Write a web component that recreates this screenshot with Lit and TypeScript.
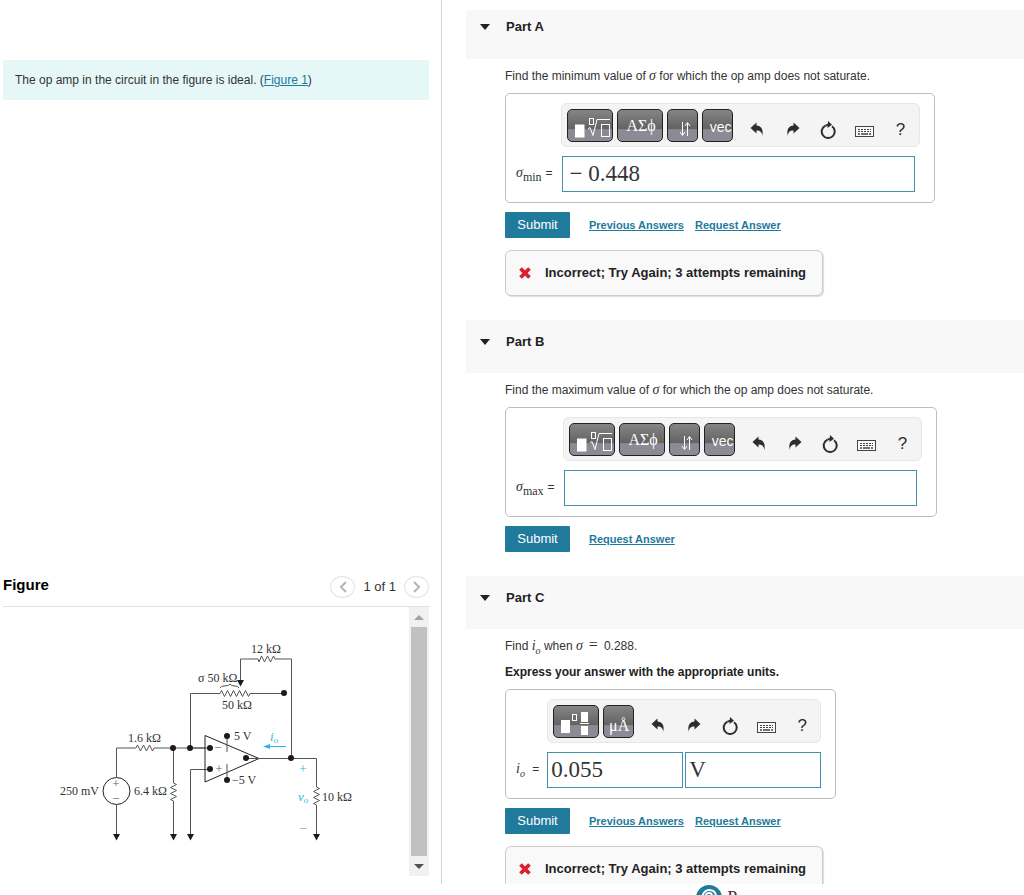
import { LitElement, html, svg, css, nothing, TemplateResult } from "lit";
import { customElement, property } from "lit/decorators.js";

const undoIcon = svg`<path d="M0.5 6 L6.5 0.5 V3.5 C11 4 13.8 7 12.2 14 C12 10.500 10.500 8.600 6.500 8.600 V11.500 Z" fill="#2d2d2d"/>`;

@customElement("math-toolbar")
export class MathToolbar extends LitElement {
  @property({ type: Boolean }) units = false;

  static styles = css`
    :host { display: block; }
    * { box-sizing: border-box; }
    .bar {
      display: flex; align-items: center; height: 44px; padding: 0 0 0 5px;
      border: 1px solid #e6e6e6; border-radius: 6px; background: #f4f4f4;
    }
    button { font: inherit; padding: 0; margin: 0; border: 0; background: none; cursor: pointer; }
    .key {
      display: flex; flex: none; justify-content: flex-end; align-items: center; overflow: hidden;
      height: 33px; margin: 0 4px 0 0; border: 1px solid #222; border-radius: 5px; color: #fff;
      background: linear-gradient(#858585 0%, #626262 62%, #8b8a95 63%, #8b8a95 100%);
    }
    .wide { width: 46px; }
    .slim { width: 31px; }
    .greek { font: 16px/20px "Liberation Serif", "DejaVu Serif", serif; justify-content: center; padding: 2px 0 0 3px; }
    .vec { font: 14px/20px "Liberation Sans", Arial, sans-serif; padding-top: 4px; }
    .micro { font: 16px/20px "Liberation Serif", serif; padding: 9px 4px 0 0; }
    .actions { display: flex; flex: 1; padding-left: 2px; padding-top: 9px; }
    .act { flex: none; width: 36px; height: 24px; display: flex; align-items: center; justify-content: center; }
    .help { font: 17px/22px "Liberation Sans", Arial, sans-serif; color: #2d2d2d; }
    svg { display: block; flex: none; }
  `;

  private mathKeys() {
    return html`
      <button class="key wide" aria-label="Templates">
        <svg width="44" height="31" fill="none" stroke="#fff">
          <rect x="7.500" y="15" width="8.500" height="12" fill="#fff" />
          <rect x="21.500" y="8.500" width="4" height="6" />
          <path d="M20 19 L22 17.500 L25 25.500 L29 9.500 H42" />
          <rect x="33.500" y="14.500" width="8" height="12" />
        </svg>
      </button>
      <button class="key wide greek">ΑΣϕ</button>
      <button class="key slim" aria-label="Arrows">
        <svg width="29" height="31" fill="none" stroke="#fff">
          <path d="M14.500 12 V25 M12 22 L14.500 25.500 L17 22 M19.500 26 V13 M17 16 L19.500 12.500 L22 16" />
        </svg>
      </button>
      <button class="key slim vec">vec</button>
    `;
  }

  private unitKeys() {
    return html`
      <button class="key wide" aria-label="Templates">
        <svg width="44" height="31" fill="none" stroke="#fff">
          <rect x="7" y="14" width="9" height="13" fill="#fff" stroke="none" />
          <rect x="18.500" y="8.500" width="4" height="6" />
          <rect x="27" y="6" width="7" height="10" fill="#fff" stroke="none" />
          <path d="M26 17.500 H35" />
          <rect x="27" y="20" width="7" height="9" fill="#fff" stroke="none" />
        </svg>
      </button>
      <button class="key slim micro">μÅ</button>
    `;
  }

  render() {
    return html`
      <div class="bar" role="toolbar">
        ${this.units ? this.unitKeys() : this.mathKeys()}
        <div class="actions">
          <button class="act" aria-label="Undo"><svg width="14" height="15">${undoIcon}</svg></button>
          <button class="act" aria-label="Redo">
            <svg width="14" height="15"><g transform="translate(14 0) scale(-1 1)">${undoIcon}</g></svg>
          </button>
          <button class="act" aria-label="Reset">
            <svg width="17" height="18" fill="none">
              <path d="M12 5.200 A6.500 6.500 0 1 1 5.500 4.600" stroke="#2d2d2d" stroke-width="2" />
              <path d="M8 0 L12 3.800 L7.500 7 Z" fill="#2d2d2d" />
              <path d="M5.500 4.600 L9 3.500" stroke="#2d2d2d" stroke-width="2" />
            </svg>
          </button>
          <button class="act" aria-label="Keyboard">
            <svg width="19" height="17" fill="none" stroke="#444">
              <rect x="0.500" y="5.500" width="18" height="10" fill="#fafafa" />
              <path d="M3 8.500 H16 M3 10.500 H16" stroke-dasharray="2 1" />
              <path d="M3 13 H5 M6 13 H13 M14 13 H16" stroke-width="1.500" />
            </svg>
          </button>
          <button class="act help" aria-label="Help">?</button>
        </div>
      </div>
    `;
  }
}

@customElement("circuit-diagram")
export class CircuitDiagram extends LitElement {
  static styles = css`
    :host { display: block; }
    svg { display: block; }
    .wire { fill: none; stroke: #555; stroke-width: 1; }
    .dot { fill: #1c1a1b; }
    .label { font: 12px "Liberation Serif", serif; fill: #333; }
    .sign { font: 13px "Liberation Serif", serif; fill: #666; text-anchor: middle; }
    .cyan { fill: #2bb5e6; }
    .var { font: italic 13px "Liberation Serif", serif; fill: #2bb5e6; }
    .sub { font-size: 9px; }
    .cyanline { stroke: #2bb5e6; fill: none; }
  `;

  render() {
    const dots = [[173, 748], [190, 748], [210, 748], [210, 769], [227, 736], [227, 780], [246, 758], [291, 758], [284, 693]];
    const grounds = [[116, 840], [173, 840], [190, 840], [316, 840], [240, 686]];
    const labels: [number, number, string][] = [
      [251, 653, "12 kΩ"], [198, 682, "σ 50 kΩ"], [222, 709, "50 kΩ"], [128, 742, "1.6 kΩ"],
      [60, 795, "250 mV"], [134, 795, "6.4 kΩ"], [234, 740, "5 V"], [232, 784, "−5 V"], [322, 801, "10 kΩ"],
    ];
    return html`
      <svg width="406" height="269" viewBox="3 607 406 269" role="img" aria-label="Op amp circuit">
        <g class="wire">
          <path d="M116.500 777 V748 H136 l1.500 -3 3 6 3 -6 3 6 3 -6 3 6 1.500 -3 H205" />
          <circle cx="116.500" cy="791" r="13.500" stroke="#222" />
          <path d="M116.500 805 V836" />
          <path d="M173.500 748 V783 l3 1.500 -6 3 6 3 -6 3 6 3 -6 3 3 1.500 V836" />
          <path d="M190.500 748 V693.500 H220 l1.500 -3 3 6 3 -6 3 6 3 -6 3 6 3 -6 3 6 3 -6 3 6 1.500 -3 H284" />
          <path d="M190.500 836 V769.500 H210" />
          <path d="M190 748 H210" />
          <path d="M205 735.500 V782 L259 758.500 Z" stroke="#222" />
          <path d="M227 736 V752 M227 780 V764" />
          <path d="M246 758.500 H316.500 V787 l3 1.500 -6 3 6 3 -6 3 6 3 -6 3 3 1.500 V836" />
          <path d="M291.500 758 V659 H275 l-1.500 -3 -3 6 -3 -6 -3 6 -3 -6 -2.500 6 -1 -3 H240.500 V682" />
          <path d="M220 688 q1 -2 4 -2 q5 0 6 -2 q1 2 5 2 q3 0 4 2" />
        </g>
        ${dots.map(([x, y]) => svg`<circle class="dot" cx=${x} cy=${y} r="3" />`)}
        ${grounds.map(([x, y]) => svg`<path class="dot" d="M${x - 3} ${y - 6} h7 l-3.500 6.500 z" />`)}
        ${labels.map(([x, y, t]) => svg`<text class="label" x=${x} y=${y}>${t}</text>`)}
        <text class="sign" x="116" y="788">+</text>
        <text class="sign" x="116" y="803">−</text>
        <text class="sign" x="218" y="752">−</text>
        <text class="sign" x="219" y="773">+</text>
        <text class="sign cyan" x="303" y="773">+</text>
        <text class="sign cyan" x="303" y="833">−</text>
        <text class="var" x="270" y="741">i<tspan class="sub" dy="2">o</tspan></text>
        <text class="var" x="298" y="801">v<tspan class="sub" dy="2">o</tspan></text>
        <path class="cyanline" d="M268 746.500 H286" />
        <path class="cyan" d="M263 746.500 L270 744 V749 Z" />
      </svg>
    `;
  }
}

@customElement("app-root")
export class AppRoot extends LitElement {
  static styles = css`
    :host {
      display: flex; flex-direction: column; height: 100vh; overflow: hidden; background: #fff;
      font: 12px/20px "Liberation Sans", Arial, sans-serif; color: #333;
    }
    * { box-sizing: border-box; }
    button { font: inherit; padding: 0; margin: 0; cursor: pointer; }
    a { color: #1c7a9c; }
    svg { display: block; }
    main { flex: 1; min-height: 0; display: grid; grid-template-columns: minmax(300px, 442px) minmax(0, 1fr); }

    .left { display: flex; flex-direction: column; min-height: 0; padding: 60px 12px 8px 3px; border-right: 1px solid #ccd3d8; }
    .intro { padding: 10px 12px; background: #e6f7f8; color: #333; }
    .figure { margin-top: auto; }
    .fighead { display: flex; align-items: center; justify-content: space-between; height: 40px; border-bottom: 1px solid #e2e2e2; }
    .fighead h2 { margin: 0; padding-bottom: 4px; font-size: 15px; line-height: 20px; color: #000; }
    .pager { display: flex; align-items: center; gap: 8px; font-size: 13px; }
    .page { display: flex; align-items: center; justify-content: center; width: 25px; height: 22px; border: 1px solid #e2e2e2; border-radius: 50%; background: #fff; }
    .figbody { display: flex; justify-content: space-between; }
    .scroll { display: flex; flex: none; flex-direction: column; width: 20px; background: #f1f1f1; }
    .step { display: flex; align-items: center; justify-content: center; height: 20px; border: 0; background: none; }
    .thumb { flex: 1; margin: 0 2px; background: #c1c1c1; }

    .right { min-height: 0; overflow: hidden; padding: 10px 0 0 24px; }
    .part { margin-bottom: 24px; }
    .parthead { display: flex; align-items: flex-start; gap: 16px; height: 53px; padding: 13px 14px 0; background: #f8f8f8; }
    .part:first-child .parthead { height: 49px; padding-top: 8px; }
    .parthead h2 { margin: 0; font-size: 13px; line-height: 18px; color: #222; }
    .toggle { display: flex; align-items: center; justify-content: center; width: 10px; height: 18px; border: 0; background: none; }
    .body { padding: 7px 14px 0 39px; }
    .body p { margin: 0; }
    .body .units { margin-top: 6px; font-weight: bold; color: #222; }
    .m { font-family: "Liberation Serif", serif; font-style: italic; font-size: 14px; line-height: 1; }
    .m sub { font-size: 10px; line-height: 0; }
    .m .up { font-style: normal; font-size: 12px; }
    .eq { margin: 0 2px; font: 16px/1 "Liberation Serif", serif; }
    .answer {
      display: grid; grid-template-columns: auto auto; width: fit-content; column-gap: 8px; row-gap: 9px;
      height: 110px; margin-top: 7px; padding: 9px 14px 10px 10px; border: 1px solid #bdbdbd; border-radius: 5px; background: #fff;
    }
    .tools { grid-column: 2; }
    .math { width: 359px; }
    .unit { width: 274px; }
    .answer label { align-self: center; padding-bottom: 2px; white-space: nowrap; }
    .answer label .m { margin-right: 4px; }
    .fields { display: flex; gap: 2px; width: 359px; padding: 0 5px 0 1px; }
    .pair { width: 274px; padding: 0; }
    .fields input {
      flex: 1; width: 0; min-width: 0; height: 36px; padding: 0 7px; border: 1px solid #4391af; border-radius: 0; outline: 0;
      font: 23px "Liberation Serif", serif; color: #333; background: #fff;
    }
    .pair input { padding: 0 3px; }
    .row { display: flex; align-items: center; margin-top: 9px; font-size: 11px; font-weight: bold; }
    .submit { width: 65px; height: 26px; margin-right: 19px; border: 0; border-radius: 1px; background: #1f7a9c; color: #fff; font-size: 13px; font-weight: normal; }
    .row a { margin-right: 11px; }
    .feedback {
      display: flex; align-items: center; width: fit-content; gap: 13px; height: 46px; margin-top: 12px; padding: 0 16px 0 12px;
      border: 1px solid #ccc; border-radius: 6px; box-shadow: 1px 1px 1px #ddd; background: #f9f9f9; font-size: 13px; font-weight: bold; color: #222;
    }
    footer { height: 11px; overflow: hidden; }
    .brand { display: flex; gap: 5px; padding-left: 68%; font: 18px/28px "Liberation Serif", serif; color: #333; }
  `;

  private part(
    letter: string, prompt: TemplateResult, label: TemplateResult, values: string[],
    options: { attempted?: boolean; units?: boolean } = {},
  ) {
    const { attempted = false, units = false } = options;
    return html`
      <section class="part">
        <div class="parthead">
          <button class="toggle" aria-label="Collapse Part ${letter}">
            <svg width="10" height="6"><path d="M0 0 H10 L5 6 Z" fill="#222" /></svg>
          </button>
          <h2>Part ${letter}</h2>
        </div>
        <div class="body">
          <p>${prompt}</p>
          ${units ? html`<p class="units">Express your answer with the appropriate units.</p>` : nothing}
          <div class="answer">
            <math-toolbar class="tools ${units ? "unit" : "math"}" ?units=${units}></math-toolbar>
            <label for="answer-${letter}">${label}</label>
            <div class="fields ${units ? "pair" : ""}">
              ${values.map((v, i) => html`
                <input id=${i ? `unit-${letter}` : `answer-${letter}`} aria-label=${i ? "Units" : "Value"} .value=${v} />`)}
            </div>
          </div>
          <div class="row">
            <button class="submit">Submit</button>
            ${attempted ? html`<a href="#previous">Previous Answers</a>` : nothing}
            <a href="#request">Request Answer</a>
          </div>
          ${attempted ? html`
            <div class="feedback" role="status">
              <svg width="14" height="14" viewBox="0 0 14 14"><path d="M2.500 2.500 L11.500 11.500 M11.500 2.500 L2.500 11.500" stroke="#d9202e" stroke-width="3.800" /></svg>
              <span>Incorrect; Try Again; 3 attempts remaining</span>
            </div>` : nothing}
        </div>
      </section>
    `;
  }

  render() {
    const sigma = html`<span class="m">σ</span>`;
    return html`
      <main>
        <div class="left">
          <div class="intro">The op amp in the circuit in the figure is ideal. (<a href="#figure">Figure 1</a>)</div>
          <section class="figure" id="figure">
            <div class="fighead">
              <h2>Figure</h2>
              <div class="pager">
                <button class="page" aria-label="Previous figure">
                  <svg width="8" height="12" fill="none" stroke="#b5b5b5" stroke-width="2"><path d="M7 1 L2 6 L7 11" /></svg>
                </button>
                <span>1 of 1</span>
                <button class="page" aria-label="Next figure">
                  <svg width="8" height="12" fill="none" stroke="#b5b5b5" stroke-width="2"><path d="M1 1 L6 6 L1 11" /></svg>
                </button>
              </div>
            </div>
            <div class="figbody">
              <circuit-diagram></circuit-diagram>
              <div class="scroll">
                <button class="step" aria-label="Scroll up"><svg width="10" height="5"><path d="M0 5 L5 0 L10 5 Z" fill="#a3a3a3" /></svg></button>
                <div class="thumb"></div>
                <button class="step" aria-label="Scroll down"><svg width="10" height="5"><path d="M0 0 H10 L5 5 Z" fill="#505050" /></svg></button>
              </div>
            </div>
          </section>
        </div>
        <div class="right">
          ${this.part("A", html`Find the minimum value of ${sigma} for which the op amp does not saturate.`,
            html`<span class="m">σ<sub class="up">min</sub></span>=`, ["− 0.448"], { attempted: true })}
          ${this.part("B", html`Find the maximum value of ${sigma} for which the op amp does not saturate.`,
            html`<span class="m">σ<sub class="up">max</sub></span>=`, [""])}
          ${this.part("C", html`Find <span class="m">i<sub>o</sub></span> when ${sigma}<span class="eq"> = </span>0.288.`,
            html`<span class="m">i<sub>o</sub></span> =`, ["0.055", "V"], { attempted: true, units: true })}
        </div>
      </main>
      <footer>
        <div class="brand">
          <svg width="26" height="26" fill="none">
            <circle cx="13" cy="14" r="13" fill="#1f7a9c" />
            <path d="M6 13 Q8 6 13 6 Q20 6 20 13 M10 12 Q10 9 13 9 Q16 9 16 12" stroke="#fff" stroke-width="2" />
          </svg>
          <span>Pearson</span>
        </div>
      </footer>
    `;
  }
}
